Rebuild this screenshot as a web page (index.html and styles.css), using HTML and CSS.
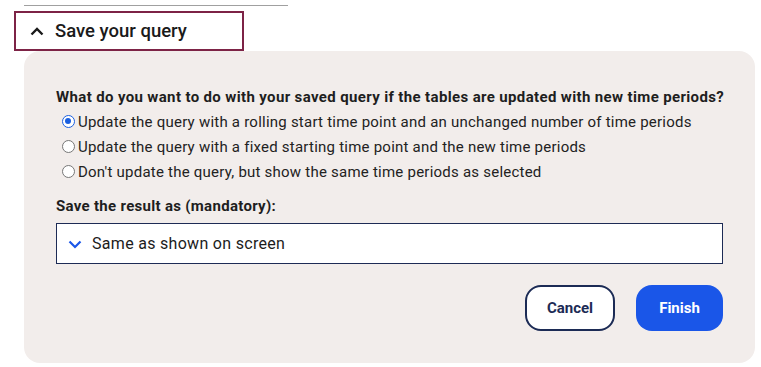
FILE: index.html
```html
<!DOCTYPE html>
<html>
<head>
<meta charset="utf-8">
<link rel="stylesheet" href="styles.css">
</head>
<body>
<div class="page">
  <div class="topline"></div>
  <button class="toggle">
    <svg class="chev-up" width="14" height="10" viewBox="0 0 14 10"><path d="M1.5 8.5 L7 3 L12.5 8.5" fill="none" stroke="#1a1a1a" stroke-width="2.4"/></svg>
    <span>Save your query</span>
  </button>
  <div class="panel">
    <div class="question">What do you want to do with your saved query if the tables are updated with new time periods?</div>
    <div class="radios">
      <label class="radio"><span class="dot on"></span>Update the query with a rolling start time point and an unchanged number of time periods</label>
      <label class="radio"><span class="dot"></span>Update the query with a fixed starting time point and the new time periods</label>
      <label class="radio"><span class="dot"></span>Don't update the query, but show the same time periods as selected</label>
    </div>
    <div class="label2">Save the result as (mandatory):</div>
    <div class="select">
      <svg class="chev-down" width="14" height="10" viewBox="0 0 14 10"><path d="M1.5 2.5 L7 8 L12.5 2.5" fill="none" stroke="#1a56e8" stroke-width="2.2"/></svg>
      <span>Same as shown on screen</span>
    </div>
    <div class="actions">
      <button class="btn cancel">Cancel</button>
      <button class="btn finish">Finish</button>
    </div>
  </div>
</div>
</body>
</html>
```
FILE: styles.css
```css
html, body { margin: 0; padding: 0; background: #fff; }
body { font-family: "Roboto", "Liberation Sans", sans-serif; color: #1c1c1c; }
.page { width: 761px; height: 367px; overflow: hidden; position: relative; }
.topline { margin-left: 24px; margin-top: 5px; width: 264px; height: 1px; background: #a0a0a0; }
.toggle {
  display: flex; align-items: center; gap: 11px;
  margin-left: 14px; margin-top: 5px;
  width: 230px; height: 40px; box-sizing: border-box;
  border: 2px solid #7d2346; background: #fff;
  padding: 0 0 0 14px;
  font-family: "Roboto", sans-serif; font-size: 18.5px; font-weight: 500; color: #1a1a1a;
}
.chev-up { display: block; }
.panel {
  margin-left: 24px; width: 731px; height: 312px; box-sizing: border-box;
  background: #f2edeb; border-radius: 16px;
  padding: 36px 32px 0 32px;
}
.question { font-size: 15px; font-weight: 700; line-height: 20px; color: #1e1e1e; letter-spacing: 0.36px; white-space: nowrap; }
.radios { margin-top: 2px; display: flex; flex-direction: column; }
.radio { display: flex; align-items: center; height: 25px; font-size: 15px; color: #222; letter-spacing: 0.23px; white-space: nowrap; }
.dot {
  width: 13px; height: 13px; box-sizing: border-box; border-radius: 50%;
  border: 1px solid #777; background: #fff; margin: 0 3px 0 6px; position: relative; flex: none;
}
.dot.on { border: 1.6px solid #1a5fe0; }
.dot.on::after { content: ""; position: absolute; left: 1.9px; top: 1.9px; width: 6px; height: 6px; border-radius: 50%; background: #1a5fe0; }
.label2 { margin-top: 12px; font-size: 15px; font-weight: 700; line-height: 20px; color: #1e1e1e; letter-spacing: 0.3px; }
.select {
  margin-top: 7px; height: 41px; box-sizing: border-box;
  border: 1px solid #1d2b55; background: #fff;
  display: flex; align-items: center; gap: 10px; padding-left: 11px;
  font-size: 16px; color: #1c1c1c; letter-spacing: 0.3px;
}
.actions { display: flex; justify-content: flex-end; gap: 21px; margin-top: 21px; }
.btn {
  height: 46px; border-radius: 16px; box-sizing: border-box;
  font-family: "Roboto", sans-serif; font-size: 15px; font-weight: 700;
}
.cancel { width: 90px; background: #fff; border: 2px solid #1c2b55; color: #1c2b55; }
.finish { width: 87px; background: #1a56e8; border: none; color: #fff; }
```
